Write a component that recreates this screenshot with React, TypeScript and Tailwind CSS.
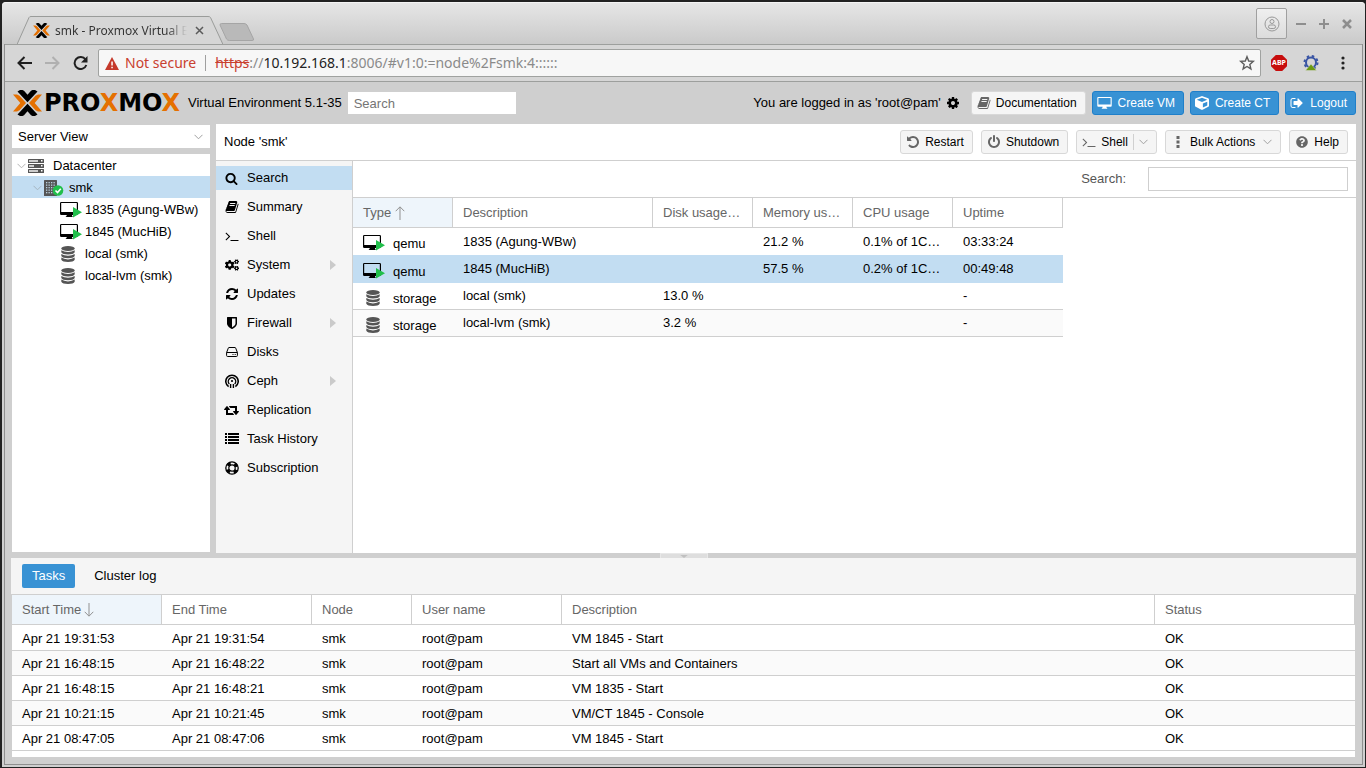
import type { ReactNode } from "react";
import { FaCogs, FaCube, FaQuestionCircle } from "react-icons/fa";

type IconProps = { className?: string };

const PATHS = {
  search:
    "M1216 832q0-185-131.5-316.5t-316.5-131.5-316.5 131.5-131.5 316.5 131.5 316.5 316.5 131.5 316.5-131.5 131.5-316.5zm512 832q0 52-38 90t-90 38q-54 0-90-38l-343-342q-179 124-399 124-143 0-273.5-55.5t-225-150-150-225-55.5-273.5 55.5-273.5 150-225 225-150 273.5-55.5 273.5 55.5 225 150 150 225 55.5 273.5q0 220-124 399l343 343q37 37 37 90z",
  book: "M1703 478q40 57 18 129l-275 906q-19 64-76.5 107.5t-122.5 43.5h-923q-77 0-148.5-53.5t-99.5-131.5q-24-67-2-127 0-4 3-27t4-37q1-8-3-21.5t-3-19.5q2-11 8-21t16.5-23.5 16.5-23.5q23-38 45-91.5t30-91.5q3-10 .5-30t-.5-28q3-11 17-28t17-23q21-36 42-92t25-90q1-9-2.5-32t.5-28q4-13 22-30.5t22-22.5q19-26 42.5-84.5t27.5-96.5q1-8-3-25.5t-2-26.5q2-8 9-18t18-23 17-21q8-12 16.5-30.5t15-35 16-36 19.5-32 26.5-23.5 36-11.5 47.5 5.5l-1 3q38-9 51-9h761q74 0 114 56t18 130l-274 906q-36 119-71.5 153.5t-128.5 34.5h-869q-27 0-38 15-11 16-1 43 24 70 144 70h923q29 0 56-15.5t35-41.5l300-987q7-22 5-57 38 15 59 43zm-1064 2q-4 13 2 22.5t20 9.5h608q13 0 25.5-9.5t16.5-22.5l21-64q4-13-2-22.5t-20-9.5h-608q-13 0-25.5 9.5t-16.5 22.5zm-83 256q-4 13 2 22.5t20 9.5h608q13 0 25.5-9.5t16.5-22.5l21-64q4-13-2-22.5t-20-9.5h-608q-13 0-25.5 9.5t-16.5 22.5z",
  terminal:
    "M649 983l-466 466q-10 10-23 10t-23-10l-50-50q-10-10-10-23t10-23l393-393-393-393q-10-10-10-23t10-23l50-50q10-10 23-10t23 10l466 466q10 10 10 23t-10 23zm1079 457v64q0 14-9 23t-23 9h-960q-14 0-23-9t-9-23v-64q0-14 9-23t23-9h960q14 0 23 9t9 23z",
  refresh:
    "M1639 1056q0 5-1 7-64 268-268 434.5t-478 166.5q-146 0-282.5-55t-243.5-157l-129 129q-19 19-45 19t-45-19-19-45v-448q0-26 19-45t45-19h448q26 0 45 19t19 45-19 45l-137 137q71 66 161 102t187 36q134 0 250-65t186-179q11-17 53-117 8-23 30-23h192q13 0 22.5 9.5t9.5 22.5zm25-800v448q0 26-19 45t-45 19h-448q-26 0-45-19t-19-45 19-45l138-138q-148-137-349-137-134 0-250 65t-186 179q-11 17-53 117-8 23-30 23h-199q-13 0-22.5-9.5t-9.5-22.5v-7q65-268 270-434.5t480-166.5q146 0 284 55.5t245 156.5l130-129q19-19 45-19t45 19 19 45z",
  shield:
    "M1344 960v-640h-448v1137q119-63 213-137 235-184 235-360zm192-768v768q0 86-33.5 170.5t-83 150-118 127.5-126.5 103-121 77.5-89.5 49.5-42.5 20q-12 6-26 6t-26-6q-16-7-42.5-20t-89.5-49.5-121-77.5-126.5-103-118-127.5-83-150-33.5-170.5v-768q0-26 19-45t45-19h1152q26 0 45 19t19 45z",
  retweet:
    "M1280 1504q0 13-9.5 22.5t-22.5 9.5h-960q-8 0-13.5-2t-9-7-5.5-8-3-11.5-1-11.5v-600h-192q-26 0-45-19t-19-45q0-24 15-41l320-384q19-22 49-22t49 22l320 384q15 17 15 41 0 26-19 45t-45 19h-192v384h576q16 0 25 11l160 192q7 10 7 21zm640-416q0 24-15 41l-320 384q-20 23-49 23t-49-23l-320-384q-15-17-15-41 0-26 19-45t45-19h192v-384h-576q-16 0-25-12l-160-192q-7-9-7-20 0-13 9.5-22.5t22.5-9.5h960q8 0 13.5 2t9 7 5.5 8 3 11.5 1 11.5v600h192q26 0 45 19t19 45z",
  undo: "M1664 896q0 156-61 298t-164 245-245 164-298 61q-172 0-327-72.5t-264-204.5q-7-10-6.500-22.500t8.500-20.500l137-138q10-9 25-9 16 2 23 12 73 95 179 147t225 52q104 0 198.500-40.500t163.500-109.500 109.500-163.500 40.500-198.500-40.500-198.500-109.500-163.500-163.500-109.500-198.500-40.500q-98 0-188 35.500t-160 101.500l137 138q31 30 14 69-17 40-59 40h-448q-26 0-45-19t-19-45v-448q0-42 40-59 39-17 69 14l130 129q107-101 244.500-156.500t284.500-55.500q156 0 298 61t245 164 164 245 61 298z",
  power:
    "M1664 896q0 156-61 298t-164 245-245 164-298 61-298-61-245-164-164-245-61-298q0-182 80.5-343t226.5-270q43-32 95.5-25t83.5 50q32 42 24.5 94.5t-49.5 84.5q-98 74-151.5 181t-53.5 228q0 104 40.5 198.5t109.5 163.5 163.5 109.5 198.5 40.5 198.5-40.5 163.5-109.5 109.5-163.5 40.5-198.5q0-121-53.5-228t-151.5-181q-42-32-49.5-84.5t24.5-94.5q31-43 84-50t95 25q146 109 226.5 270t80.5 343zm-640-768v640q0 52-38 90t-90 38-90-38-38-90v-640q0-52 38-90t90-38 90 38 38 90z",
  signOut:
    "M704 1440q0 4 1 20t.5 26.5-3 23.5-10 19.5-20.5 6.5h-320q-119 0-203.5-84.5t-84.5-203.5v-704q0-119 84.5-203.5t203.5-84.5h320q13 0 22.5 9.5t9.5 22.5q0 4 1 20t.5 26.5-3 23.5-10 19.5-20.5 6.5h-320q-66 0-113 47t-47 113v704q0 66 47 113t113 47h312l11.5 1 11.5 3 8 5.5 7 9 2 13.5zm928-544q0 26-19 45l-544 544q-19 19-45 19t-45-19-19-45v-288h-448q-26 0-45-19t-19-45v-384q0-26 19-45t45-19h448v-288q0-26 19-45t45-19 45 19l544 544q19 19 19 45z",
  cog: "M1152 896q0-106-75-181t-181-75-181 75-75 181 75 181 181 75 181-75 75-181zm512-109v222q0 12-8 23t-20 13l-185 28q-19 54-39 91 35 50 107 138 10 12 10 25t-9 23q-27 37-99 108t-94 71q-12 0-26-9l-138-108q-44 23-91 38-16 136-29 186-7 28-36 28h-222q-14 0-24.5-8.5t-11.5-21.5l-28-184q-49-16-90-37l-141 107q-10 9-25 9-14 0-25-11-126-114-165-168-7-10-7-23 0-12 8-23 15-21 51-66.5t54-70.5q-27-50-41-99l-183-27q-13-2-21-12.5t-8-23.5v-222q0-12 8-23t19-13l186-28q14-46 39-92-40-57-107-138-10-12-10-24 0-10 9-23 26-36 98.5-107.5t94.5-71.5q13 0 26 10l138 107q44-23 91-38 16-136 29-186 7-28 36-28h222q14 0 24.5 8.5t11.5 21.5l28 184q49 16 90 37l142-107q9-9 24-9 13 0 25 10 129 119 165 170 7 8 7 22 0 12-8 23-15 21-51 66.5t-54 70.5q26 50 41 98l183 28q13 2 21 12.5t8 23.5z",
};

function Glyph({ name, className = "size-[14px]" }: { name: keyof typeof PATHS; className?: string }) {
  return (
    <svg
      viewBox={name === "retweet" ? "0 0 1920 1792" : "0 0 1792 1792"}
      fill="currentColor"
      className={`shrink-0 ${className}`}
      aria-hidden="true"
    >
      <path d={PATHS[name]} />
    </svg>
  );
}

function LogoMark({ className = "" }: IconProps) {
  return (
    <svg viewBox="0 0 29 26" className={`shrink-0 ${className}`} aria-hidden="true">
      <path
        fill="#e57000"
        d="M0 4.5h4l2.5 1.2L13 13l-6.500 7.300L4 21.500H0L7.300 13zM29 4.500h-4l-2.500 1.200L16 13l6.500 7.300 2.500 1.200h4L21.700 13z"
      />
      <path
        d="M4.500 1.500 7 0h2.500l1.500.8 3.500 4 3.500-4L19.500 0H22l2.500 1.500-10 10.800zM4.500 24.500 7 26h2.500l1.500-.8 3.500-4 3.500 4 1.500.8H22l2.500-1.500-10-10.800z"
      />
    </svg>
  );
}

function ChevronDown({ className = "w-[9px] text-[#a0a0a0]" }: IconProps) {
  return (
    <svg viewBox="0 0 9 6" fill="none" stroke="currentColor" className={`shrink-0 ${className}`} aria-hidden="true">
      <path d="M.5.8l4 4 4-4" />
    </svg>
  );
}

function DesktopIcon() {
  return (
    <svg viewBox="0 0 16 14" className="h-[14px] w-[15px] shrink-0" fill="currentColor" aria-hidden="true">
      <path
        fillRule="evenodd"
        d="M1.300.500h13.400q1 0 1 1v8.400q0 1-1 1H10q0 1 .6 1.300.4.300.4.800h-6q0-.5.4-.8.6-.3.600-1.300H1.300q-1 0-1-1V1.500q0-1 1-1zM1.500 1.700v7h13v-7z"
      />
    </svg>
  );
}

function VmIcon() {
  return (
    <svg viewBox="0 0 23 18" className="h-[18px] w-[23px] shrink-0" aria-hidden="true">
      <path
        fillRule="evenodd"
        d="M1.300 1h15.400q1.300 0 1.300 1.300v10.400q0 1.300-1.300 1.300H12l.2 1.200 1 .8H5.500l1-1 .3-1H1.300Q0 14 0 12.700V2.300Q0 1 1.300 1zM1.200 2v9h15.600V2z"
      />
      <path fill="#21bf4b" d="M13 6l9 5.200-9 5.300z" />
    </svg>
  );
}

function StorageIcon() {
  return (
    <svg viewBox="0 0 14 16" className="h-4 w-[14px] shrink-0" fill="#555" aria-hidden="true">
      <ellipse cx="7" cy="2.500" rx="6.700" ry="2.500" />
      <path d="M.3 4.200Q3 6 7 6t6.700-1.800v2.100Q12.500 8.500 7 8.500T.3 6.300z" />
      <path d="M.3 7.900Q3 9.700 7 9.700t6.700-1.800V10Q12.500 12.200 7 12.200T.3 10z" />
      <path d="M.3 11.600q2.700 1.800 6.700 1.800t6.700-1.800v2.100Q12.500 15.900 7 15.900T.3 13.700z" />
    </svg>
  );
}

function ServerIcon() {
  return (
    <svg viewBox="0 0 16 14" className="h-[14px] w-4 shrink-0" aria-hidden="true">
      {[0, 5, 10].map((y) => (
        <g key={y}>
          <rect x="0" y={y} width="16" height="4" rx=".5" fill="#555" />
          <rect x="1" y={y + 1} width={y === 5 ? 5 : 9} height="2" fill="#ccc" />
          <rect x="13" y={y + 1} width="1.500" height="1.500" fill="#fff" />
        </g>
      ))}
    </svg>
  );
}

function NodeIcon() {
  return (
    <svg viewBox="0 0 20 16" className="h-4 w-5 shrink-0" aria-hidden="true">
      <rect x="0" y="0" width="13" height="16" rx=".5" fill="#555" />
      {[2, 4.5, 7, 9.5, 12].map((y) =>
        [2, 4.5, 7, 9.5].map((x) => <rect key={`${x}-${y}`} x={x} y={y} width="1.300" height="1.300" fill="#b9cfdf" />)
      )}
      <circle cx="14" cy="10.500" r="5.300" fill="#21bf4b" />
      <path d="M11.500 10.500l2 2 3.300-3.700" fill="none" stroke="#fff" strokeWidth="1.600" />
    </svg>
  );
}

function CephIcon() {
  return (
    <svg viewBox="0 0 14 14" className="size-[14px]" fill="none" stroke="currentColor" strokeWidth="1.600" aria-hidden="true">
      <path d="M3.600 12.600a6.200 6.200 0 1 1 6.800 0" />
      <path d="M4.300 9.900a3.700 3.700 0 1 1 5.400 0" strokeWidth="1.400" />
      <circle cx="7" cy="7" r="1.100" fill="currentColor" stroke="none" />
      <path d="M5.600 14v-4M8.400 14v-4" strokeWidth="1.400" />
    </svg>
  );
}

function DiskIcon() {
  return (
    <svg viewBox="0 0 12 10" className="h-[10px] w-3" fill="none" stroke="currentColor" aria-hidden="true">
      <path d="M.6 5.500 2.300 1.100Q2.500.5 3 .5h6q.5 0 .7.600l1.700 4.400v3q0 1-1 1H1.600q-1 0-1-1zM.6 5.500h10.800" />
      <path d="M6.500 7.500h1M8.700 7.500h1" />
    </svg>
  );
}

function LifeRingIcon() {
  return (
    <svg viewBox="0 0 14 14" className="size-[14px]" fill="none" stroke="currentColor" aria-hidden="true">
      <circle cx="7" cy="7" r="6.200" strokeWidth="1.300" />
      <circle cx="7" cy="7" r="3.200" strokeWidth="1.200" />
      <circle cx="7" cy="7" r="4.800" strokeWidth="2.800" strokeDasharray="3.540 4" strokeDashoffset="-2" />
    </svg>
  );
}

function ListIcon() {
  return (
    <svg viewBox="0 0 14 12" className="h-3 w-[14px]" fill="currentColor" aria-hidden="true">
      {[0, 3, 6, 9].map((y) => (
        <path key={y} d={`M0 ${y}h2v2H0zM3 ${y}h11v2H3z`} />
      ))}
    </svg>
  );
}

function SortArrow({ down = false }: { down?: boolean }) {
  return (
    <svg viewBox="0 0 10 14" className={`h-[14px] w-[10px] ${down ? "rotate-180" : ""}`} fill="none" stroke="#919191" aria-hidden="true">
      <path d="M5 14V1M.7 5.200 5 .8l4.300 4.400" />
    </svg>
  );
}

const MENU: { label: string; icon: ReactNode; sub?: boolean }[] = [
  { label: "Search", icon: <Glyph name="search" className="size-[13px]" /> },
  { label: "Summary", icon: <Glyph name="book" /> },
  { label: "Shell", icon: <Glyph name="terminal" /> },
  { label: "System", icon: <FaCogs className="size-[14px]" />, sub: true },
  { label: "Updates", icon: <Glyph name="refresh" /> },
  { label: "Firewall", icon: <Glyph name="shield" />, sub: true },
  { label: "Disks", icon: <DiskIcon /> },
  { label: "Ceph", icon: <CephIcon />, sub: true },
  { label: "Replication", icon: <Glyph name="retweet" className="h-[14px] w-[15px]" /> },
  { label: "Task History", icon: <ListIcon /> },
  { label: "Subscription", icon: <LifeRingIcon /> },
];

const RESOURCES = [
  { type: "qemu", desc: "1835 (Agung-WBw)", disk: "", mem: "21.2 %", cpu: "0.1% of 1C…", uptime: "03:33:24", row: "h-[27px] bg-white" },
  { type: "qemu", desc: "1845 (MucHiB)", disk: "", mem: "57.5 %", cpu: "0.2% of 1C…", uptime: "00:49:48", row: "h-[28px] bg-[#c2ddf2]" },
  { type: "storage", desc: "local (smk)", disk: "13.0 %", mem: "", cpu: "", uptime: "-", row: "h-[27px] bg-white *:border-b" },
  { type: "storage", desc: "local-lvm (smk)", disk: "3.2 %", mem: "", cpu: "", uptime: "-", row: "h-[27px] bg-[#fafafa] *:border-b" },
];

const TASKS = [
  { start: "Apr 21 19:31:53", end: "Apr 21 19:31:54", desc: "VM 1845 - Start" },
  { start: "Apr 21 16:48:15", end: "Apr 21 16:48:22", desc: "Start all VMs and Containers" },
  { start: "Apr 21 16:48:15", end: "Apr 21 16:48:21", desc: "VM 1835 - Start" },
  { start: "Apr 21 10:21:15", end: "Apr 21 10:21:45", desc: "VM/CT 1845 - Console" },
  { start: "Apr 21 08:47:05", end: "Apr 21 08:47:06", desc: "VM 1845 - Start" },
];

function TitleBar() {
  return (
    <div className="flex h-[42px] shrink-0 justify-between rounded-t border-t border-[#f4f4f4] bg-linear-to-b from-[#e6e6e6] to-[#cacaca]">
      <div className="flex items-end pl-[15px]">
        <div className="relative h-7 w-[206px]">
          <svg viewBox="0 0 206 28" className="absolute inset-0 h-7 w-[206px]" aria-hidden="true">
            <path d="M0 28.500L12 1.500Q12.500.5 14 .5H191q2 0 2.500 1L206 28.500z" fill="#d6d6d6" stroke="#9a9c9a" />
          </svg>
          <div className="relative flex h-7 items-center pt-px pl-4">
            <LogoMark className="h-[15px] w-[17px]" />
            <span className="ml-[5px] w-[132px] overflow-hidden bg-linear-to-r from-[#333] from-85% to-transparent bg-clip-text text-[12px] leading-5 whitespace-nowrap text-transparent">
              smk - Proxmox Virtual E
            </span>
            <button type="button" aria-label="Close tab" className="ml-2 text-[#5a5a5a]">
              <svg viewBox="0 0 9 9" className="size-[9px]" stroke="currentColor" strokeWidth="1.500">
                <path d="M1 1l7 7M8 1L1 8" />
              </svg>
            </button>
          </div>
        </div>
        <button type="button" aria-label="New tab" className="mb-[3px] -ml-1">
          <svg viewBox="0 0 36 18" className="h-[18px] w-9">
            <path d="M2.500.5H25q2 0 3 1.500L34.500 16q.5 1.500-1.500 1.500H10.500q-2 0-3-1.500L1 2Q.8.500 2.500.500z" fill="#b9b9b9" stroke="#a5a5a5" />
          </svg>
        </button>
      </div>
      <div className="flex items-start gap-[9px] pt-[5px] pr-[13px] text-[#8e8e8e]">
        <button
          type="button"
          aria-label="Account"
          className="flex size-[31px] items-center justify-center rounded-xs border border-[#a0a0a0] bg-linear-to-b from-[#efefef] to-[#dcdcdc]"
        >
          <svg viewBox="0 0 16 16" className="size-4" fill="none" stroke="#999">
            <circle cx="8" cy="8" r="7" />
            <circle cx="8" cy="5.500" r="2" />
            <rect x="4.500" y="9" width="7" height="3.500" rx="1.700" />
          </svg>
        </button>
        <div className="flex gap-[13px] pt-[11px]">
          <button type="button" aria-label="Minimize">
            <svg viewBox="0 0 10 10" className="size-[10px]" stroke="currentColor" strokeWidth="2">
              <path d="M0 5h10" />
            </svg>
          </button>
          <button type="button" aria-label="Maximize">
            <svg viewBox="0 0 10 10" className="size-[10px]" stroke="currentColor" strokeWidth="2">
              <path d="M0 5h10M5 0v10" />
            </svg>
          </button>
          <button type="button" aria-label="Close">
            <svg viewBox="0 0 10 10" className="size-[10px]" stroke="currentColor" strokeWidth="2.500">
              <path d="M1 1l8 8M9 1L1 9" />
            </svg>
          </button>
        </div>
      </div>
    </div>
  );
}

function AddressBar() {
  return (
    <div className="flex h-[38px] shrink-0 items-center border-t border-b border-[#9d9f9d] bg-[#d6d6d6] pr-[7px] pl-3">
      <div className="flex items-center gap-[13px] text-[#1f1f1f]">
        <button type="button" aria-label="Back">
          <svg viewBox="0 0 15 14" className="h-[14px] w-[15px]" fill="none" stroke="currentColor" strokeWidth="2">
            <path d="M15 7H2M7.500 1l-6 6 6 6" />
          </svg>
        </button>
        <button type="button" aria-label="Forward" className="text-[#b0b0b0]">
          <svg viewBox="0 0 15 14" className="h-[14px] w-[15px]" fill="none" stroke="currentColor" strokeWidth="2">
            <path d="M0 7h13M7.500 1l6 6-6 6" />
          </svg>
        </button>
        <button type="button" aria-label="Reload">
          <svg viewBox="0 0 15 14" className="h-[14px] w-[15px]" fill="none" stroke="currentColor" strokeWidth="2">
            <path d="M12.500 3.500A6 6 0 1 0 13.300 9" />
            <path d="M14.500 0v6.500H8z" fill="currentColor" stroke="none" />
          </svg>
        </button>
      </div>
      <div className="ml-[10px] flex h-7 flex-1 items-center rounded-xs border border-[#a0a2a0] bg-[#f7f7f7] pr-1 pl-[6px] text-[14px] leading-5">
        <svg viewBox="0 0 14 13" className="h-[13px] w-[14px]" aria-hidden="true">
          <path d="M7 0l7 13H0z" fill="#c5392b" />
          <path d="M6.300 4.500h1.500v4H6.300zM6.300 9.700h1.500v1.500H6.300z" fill="#fff" />
        </svg>
        <span className="ml-[6px] text-[#c9402f]">Not secure</span>
        <span className="mx-[9px] h-4 w-px bg-[#9f9f9f]" />
        <span className="whitespace-nowrap text-[#8a8a8a]">
          <span className="text-[#c9402f] line-through">https</span>://
          <span className="text-[#222]">10.192.168.1</span>:8006/#v1:0:=node%2Fsmk:4::::::
        </span>
        <button type="button" aria-label="Bookmark" className="ml-auto text-[#5d5d5d]">
          <svg viewBox="0 0 18 18" className="size-[18px]" fill="none" stroke="currentColor" strokeWidth="1.400">
            <path d="M9 2.700l1.700 4.300 4.600.4-3.500 3 1.100 4.500L9 12.500l-3.900 2.400 1.100-4.500-3.500-3 4.600-.4z" />
          </svg>
        </button>
      </div>
      <button
        type="button"
        className="ml-[10px] size-4 bg-[#c70d0d] text-center text-[7px] leading-4 font-bold text-white [clip-path:polygon(30%_0,70%_0,100%_30%,100%_70%,70%_100%,30%_100%,0_70%,0_30%)]"
      >
        ABP
      </button>
      <button type="button" aria-label="Extension" className="ml-4">
        <svg viewBox="0 0 16 16" className="size-4">
          <circle cx="8" cy="7.500" r="5" fill="none" stroke="#3a55a4" strokeWidth="2" />
          <circle cx="8" cy="7.500" r="6.500" fill="none" stroke="#3a55a4" strokeWidth="2" strokeDasharray="2.500 2.605" />
          <path d="M8 9l5.500 6.500h-11z" fill="#6c9a10" stroke="#d6d6d6" strokeWidth=".5" />
        </svg>
      </button>
      <button type="button" aria-label="Menu" className="ml-[22px] pr-[10px]">
        <svg viewBox="0 0 4 14" className="h-[14px] w-1" fill="#222">
          <circle cx="2" cy="2" r="1.600" />
          <circle cx="2" cy="7" r="1.600" />
          <circle cx="2" cy="12" r="1.600" />
        </svg>
      </button>
    </div>
  );
}

function BlueButton({ icon, children }: { icon: ReactNode; children: ReactNode }) {
  return (
    <button
      type="button"
      className="flex h-6 items-center gap-[6px] rounded-[3px] border border-[#1f7fc9] bg-[#3892d4] pr-2 pl-1 text-[12px] leading-4 text-white"
    >
      {icon}
      {children}
    </button>
  );
}

function GrayButton({ icon, children }: { icon: ReactNode; children: ReactNode }) {
  return (
    <button
      type="button"
      className="flex h-6 items-center gap-[5px] rounded-[3px] border border-[#d8d8d8] bg-[#f5f5f5] pr-2 pl-[5px] text-[12px] leading-4 text-black"
    >
      <span className="flex w-[14px] justify-center text-[#666]">{icon}</span>
      {children}
    </button>
  );
}

function PveHeader() {
  return (
    <header className="flex h-[42px] shrink-0 items-center pl-[2px]">
      <LogoMark className="h-[26px] w-[29px]" />
      <span className="ml-[2px] w-[138px] font-['DejaVu_Sans',sans-serif] text-[24px] leading-6 font-bold">
        PRO<span className="text-[#e57000]">X</span>MO<span className="text-[#e57000]">X</span>
      </span>
      <span className="ml-[6px] whitespace-nowrap">Virtual Environment 5.1-35</span>
      <input
        aria-label="Search"
        placeholder="Search"
        className="ml-[6px] h-[22px] w-[168px] bg-white px-[6px] outline-none placeholder:text-[#757575]"
      />
      <span className="ml-auto whitespace-nowrap">You are logged in as 'root@pam'</span>
      <button type="button" aria-label="My settings" className="mr-[11px] ml-[5px]">
        <Glyph name="cog" />
      </button>
      <div className="flex gap-[6px]">
        <GrayButton icon={<Glyph name="book" />}>Documentation</GrayButton>
        <BlueButton icon={<DesktopIcon />}>Create VM</BlueButton>
        <BlueButton icon={<FaCube className="size-[14px]" />}>Create CT</BlueButton>
        <BlueButton icon={<Glyph name="signOut" />}>Logout</BlueButton>
      </div>
    </header>
  );
}

function ResourceTree() {
  return (
    <aside className="flex w-[198px] shrink-0 flex-col pt-px pb-px">
      <button type="button" className="flex h-[23px] items-center justify-between bg-white pr-[7px] pl-[6px]">
        Server View
        <ChevronDown />
      </button>
      <ul className="mt-[6px] flex-1 bg-white">
        <li className="flex h-[22px] items-center pt-[2px] pl-[5px]">
          <ChevronDown className="w-[9px] text-[#b5b5b5]" />
          <span className="mr-[9px] ml-[2px]">
            <ServerIcon />
          </span>
          Datacenter
        </li>
        <li className="flex h-[22px] items-center bg-[#c2ddf2] pt-[2px] pl-[21px]">
          <ChevronDown className="w-[9px] text-[#a5b5c0]" />
          <span className="mr-[5px] ml-[2px]">
            <NodeIcon />
          </span>
          smk
        </li>
        {["1835 (Agung-WBw)", "1845 (MucHiB)"].map((name) => (
          <li key={name} className="flex h-[22px] items-center gap-[2px] pt-[2px] pl-12 whitespace-nowrap">
            <VmIcon />
            {name}
          </li>
        ))}
        {["local (smk)", "local-lvm (smk)"].map((name) => (
          <li key={name} className="flex h-[22px] items-center gap-[10px] pt-[2px] pl-[49px] whitespace-nowrap">
            <StorageIcon />
            {name}
          </li>
        ))}
      </ul>
    </aside>
  );
}

function NodeMenu() {
  return (
    <nav className="flex w-[137px] shrink-0 flex-col gap-[5px] border-r border-[#cfcfcf] bg-[#f5f5f5] pt-[5px]">
      {MENU.map((item) => (
        <button
          key={item.label}
          type="button"
          className={`flex h-6 items-center pr-4 pl-2 ${item.label === "Search" ? "bg-[#c2ddf2]" : ""}`}
        >
          <span className="mr-2 flex w-[15px] justify-center">{item.icon}</span>
          {item.label}
          {item.sub && (
            <svg viewBox="0 0 6 10" className="ml-auto h-[10px] w-[6px]" fill="#cacaca">
              <path d="M0 0l6 5-6 5z" />
            </svg>
          )}
        </button>
      ))}
    </nav>
  );
}

function ResourceTable() {
  return (
    <table className="w-[710px] table-fixed border-separate border-spacing-0 text-left">
      <colgroup>
        <col className="w-[100px]" />
        <col className="w-[200px]" />
        <col className="w-[100px]" />
        <col className="w-[100px]" />
        <col className="w-[100px]" />
        <col className="w-[110px]" />
      </colgroup>
      <thead>
        <tr className="h-[30px] text-[#666]">
          <th className="border-r border-b border-[#cfcfcf] bg-[#eef5fb] px-[10px] font-normal">
            <span className="flex items-center gap-1">
              Type <SortArrow />
            </span>
          </th>
          {["Description", "Disk usage…", "Memory us…", "CPU usage", "Uptime"].map((label) => (
            <th key={label} className="border-r border-b border-[#cfcfcf] pl-[10px] font-normal whitespace-nowrap">
              {label}
            </th>
          ))}
        </tr>
      </thead>
      <tbody>
        {RESOURCES.map((r) => (
          <tr key={r.desc} className={`*:border-[#cfcfcf] ${r.row}`}>
            <td className="pt-[5px] pl-[10px]">
              <span className="flex h-5 items-center">
                <span className={`flex w-[30px] shrink-0 pb-[2px] ${r.type === "qemu" ? "" : "pl-[3px]"}`}>
                  {r.type === "qemu" ? <VmIcon /> : <StorageIcon />}
                </span>
                {r.type}
              </span>
            </td>
            <td className="pl-[10px]">{r.desc}</td>
            <td className="pl-[10px]">{r.disk}</td>
            <td className="pl-[10px]">{r.mem}</td>
            <td className="pl-[10px] whitespace-nowrap">{r.cpu}</td>
            <td className="pl-[10px]">{r.uptime}</td>
          </tr>
        ))}
      </tbody>
    </table>
  );
}

function NodePanel() {
  return (
    <main className="flex min-w-0 flex-1 flex-col bg-white">
      <div className="flex h-[37px] shrink-0 items-center justify-between border-b border-[#cfcfcf] px-2">
        <span>Node 'smk'</span>
        <div className="flex gap-2">
          <GrayButton icon={<Glyph name="undo" />}>Restart</GrayButton>
          <GrayButton icon={<Glyph name="power" />}>Shutdown</GrayButton>
          <GrayButton icon={<Glyph name="terminal" />}>
            Shell
            <span className="h-4 w-px bg-[#d0d0d0]" />
            <ChevronDown />
          </GrayButton>
          <GrayButton
            icon={
              <svg viewBox="0 0 12 12" className="size-3" fill="currentColor">
                <path d="M4.500 0h3v3h-3zM4.500 4.500h3v3h-3zM4.500 9h3v3h-3z" />
              </svg>
            }
          >
            Bulk Actions
            <ChevronDown className="ml-[3px] w-[9px] text-[#a0a0a0]" />
          </GrayButton>
          <GrayButton icon={<FaQuestionCircle className="size-3" />}>Help</GrayButton>
        </div>
      </div>
      <div className="flex min-h-0 flex-1">
        <NodeMenu />
        <section className="flex min-w-0 flex-1 flex-col">
          <div className="flex h-[37px] shrink-0 items-center justify-end border-b border-[#cfcfcf] pr-2">
            <label htmlFor="filter" className="mr-[22px] text-[#555]">
              Search:
            </label>
            <input id="filter" className="h-6 w-[200px] border border-[#cfcfcf] bg-white px-2 outline-none" />
          </div>
          <ResourceTable />
        </section>
      </div>
    </main>
  );
}

function TaskPanel() {
  return (
    <section className="shrink-0">
      <div className="flex h-9 items-center bg-[#f5f5f5] pl-[11px]">
        <button type="button" className="h-6 rounded-xs bg-[#3892d4] px-[10px] text-white">
          Tasks
        </button>
        <button type="button" className="ml-[9px] h-6 px-[10px]">
          Cluster log
        </button>
      </div>
      <div className="mr-px ml-px border-t border-[#cfcfcf] bg-white pb-[6px]">
        <table className="w-full table-fixed border-separate border-spacing-0 text-left">
          <colgroup>
            <col className="w-[150px]" />
            <col className="w-[150px]" />
            <col className="w-[100px]" />
            <col className="w-[150px]" />
            <col />
            <col className="w-[200px]" />
          </colgroup>
          <thead>
            <tr className="h-[30px] text-[#666]">
              <th className="border-r border-b border-[#cfcfcf] bg-[#eef5fb] px-[10px] font-normal">
                <span className="flex items-center gap-[3px]">
                  Start Time <SortArrow down />
                </span>
              </th>
              {["End Time", "Node", "User name", "Description", "Status"].map((label) => (
                <th key={label} className="border-r border-b border-[#cfcfcf] px-[10px] font-normal">
                  {label}
                </th>
              ))}
            </tr>
          </thead>
          <tbody>
            {TASKS.map((t) => (
              <tr
                key={t.end}
                className="h-[25px] *:border-b *:border-[#cfcfcf] *:px-[10px] *:pt-[2px] first:h-[26px] even:bg-[#fafafa]"
              >
                <td>{t.start}</td>
                <td>{t.end}</td>
                <td>smk</td>
                <td>root@pam</td>
                <td>{t.desc}</td>
                <td>OK</td>
              </tr>
            ))}
          </tbody>
        </table>
      </div>
    </section>
  );
}

export default function App() {
  return (
    <div className="flex h-screen flex-col bg-[#222] pt-[2px] pr-px pb-px pl-[2px] font-['Noto_Sans',sans-serif]">
      <div className="flex min-h-0 flex-1 flex-col rounded-t bg-[#cfcfcf]">
        <TitleBar />
        <div className="mx-[2px] mb-[2px] flex min-h-0 flex-1 flex-col border-r border-b border-l border-[#8f8f8f]">
          <AddressBar />
          <div className="flex min-h-0 flex-1 flex-col pr-[6px] pb-[7px] pl-[6px] font-['Liberation_Sans',Arial,sans-serif] text-[13px] leading-5 text-black">
            <PveHeader />
            <div className="flex min-h-0 flex-1 gap-[6px] pl-px">
              <ResourceTree />
              <NodePanel />
            </div>
            <button
              type="button"
              aria-label="Collapse task panel"
              className="mx-auto flex h-[5px] w-12 shrink-0 justify-center border border-b-0 border-[#e8e8e8] bg-[#dedede]"
            >
              <svg viewBox="0 0 10 4" className="mt-px h-[3px] w-[10px]" fill="#c0c0c0">
                <path d="M0 0h10L5 4z" />
              </svg>
            </button>
            <TaskPanel />
          </div>
        </div>
      </div>
    </div>
  );
}
